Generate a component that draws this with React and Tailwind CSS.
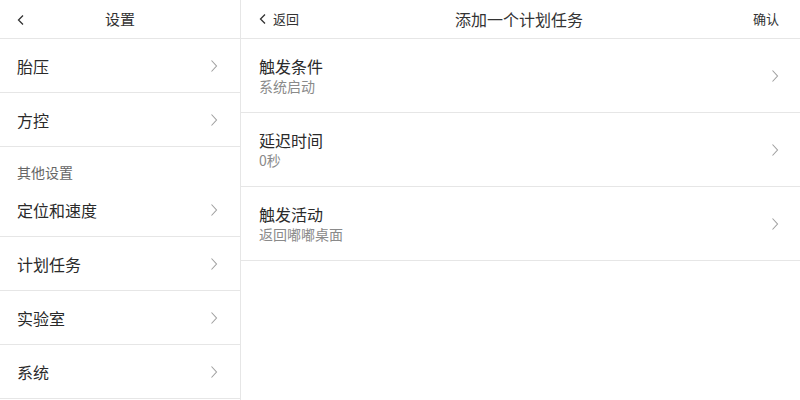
import React from "react";

const font = { fontFamily: '"Noto Sans CJK SC", "Noto Sans", sans-serif' };

function Chevron({ className = "" }) {
  return (
    <svg width="8" height="14" viewBox="0 0 8 14" className={className}>
      <path d="M1.5 1.5 L6.5 7 L1.5 12.5" fill="none" stroke="#a0a0a0" strokeWidth="1.1" />
    </svg>
  );
}

function BackChevron() {
  return (
    <svg width="8" height="12" viewBox="0 0 8 12">
      <path d="M6 1.5 L1.5 6 L6 10.5" fill="none" stroke="#333" strokeWidth="1.3" />
    </svg>
  );
}

function LeftRow({ label }) {
  return (
    <div className="flex h-[54px] items-center justify-between border-b border-[#e6e6e6] pl-[17px] pr-[22px]">
      <span className="text-[16px] text-[#2a2a2a]">{label}</span>
      <Chevron />
    </div>
  );
}

function RightRow({ title, sub }) {
  return (
    <div className="flex h-[74px] items-center justify-between border-b border-[#e6e6e6] pl-[18px] pr-[21px]">
      <div className="flex flex-col">
        <span className="text-[16px] leading-[21px] text-[#2a2a2a]">{title}</span>
        <span className="text-[14px] leading-[19px] text-[#8a8a8a]">{sub}</span>
      </div>
      <Chevron />
    </div>
  );
}

export default function App() {
  return (
    <div style={font} className="flex h-[400px] w-[800px] overflow-hidden bg-white">
      <div className="flex w-[241px] shrink-0 flex-col border-r border-[#e6e6e6]">
        <div className="relative flex h-[39px] shrink-0 items-center justify-center border-b border-[#e6e6e6]">
          <div className="absolute left-[17px] top-[14px]">
            <BackChevron />
          </div>
          <span className="text-[15px] text-[#333]">设置</span>
        </div>
        <LeftRow label="胎压" />
        <LeftRow label="方控" />
        <div className="flex h-[36px] items-end pb-[1px] pl-[17px]">
          <span className="text-[14px] leading-[20px] text-[#666]">其他设置</span>
        </div>
        <LeftRow label="定位和速度" />
        <LeftRow label="计划任务" />
        <LeftRow label="实验室" />
        <LeftRow label="系统" />
      </div>
      <div className="flex flex-1 flex-col">
        <div className="flex h-[39px] shrink-0 items-center justify-between border-b border-[#e6e6e6] pl-[18px] pr-[21px]">
          <div className="flex w-[60px] items-center gap-[6px]">
            <BackChevron />
            <span className="text-[13px] text-[#333]">返回</span>
          </div>
          <span className="text-[16px] text-[#333]">添加一个计划任务</span>
          <div className="flex w-[60px] justify-end">
            <span className="text-[13px] text-[#333]">确认</span>
          </div>
        </div>
        <RightRow title="触发条件" sub="系统启动" />
        <RightRow title="延迟时间" sub="0秒" />
        <RightRow title="触发活动" sub="返回嘟嘟桌面" />
      </div>
    </div>
  );
}
